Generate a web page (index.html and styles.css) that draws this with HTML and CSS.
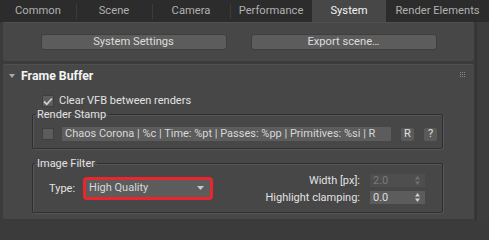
FILE: index.html
```html
<!DOCTYPE html>
<html>
<head>
<meta charset="utf-8">
<link rel="stylesheet" href="styles.css">
</head>
<body>
<div class="tabs">
  <div class="tab w-common">Common</div>
  <div class="tab w-scene">Scene</div>
  <div class="tab w-camera">Camera</div>
  <div class="tab w-perf">Performance</div>
  <div class="tab w-system active">System</div>
  <div class="tab w-re">Render Elements</div>
</div>
<div class="main">
  <div class="content">
    <div class="panel top-panel">
      <div class="btn wide">System Settings</div>
      <div class="btn wide">Export scene…</div>
    </div>
    <div class="panel fb">
      <div class="rollhead">
        <svg class="tri" width="6" height="4" viewBox="0 0 6 4"><path d="M0 0H6L3 4Z" fill="#a8a8a8"/></svg>
        <span class="rolltitle">Frame Buffer</span>
        <svg class="grip" width="6" height="6" viewBox="0 0 6 6" fill="#8a8a8a">
          <rect x="0" y="0" width="1" height="1"/><rect x="2" y="0" width="1" height="1"/><rect x="4" y="0" width="1" height="1"/>
          <rect x="0" y="2" width="1" height="1"/><rect x="2" y="2" width="1" height="1"/><rect x="4" y="2" width="1" height="1"/>
          <rect x="0" y="4" width="1" height="1"/><rect x="2" y="4" width="1" height="1"/><rect x="4" y="4" width="1" height="1"/>
        </svg>
      </div>
      <div class="body">
        <div class="checkrow">
          <span class="cb checked"><svg width="10" height="9" viewBox="0 0 10 9"><path d="M1 4.5L3.8 7.3L9 1.5" fill="none" stroke="#cfcfcf" stroke-width="1.8"/></svg></span>
          <span class="label">Clear VFB between renders</span>
        </div>
        <fieldset class="group stamp">
          <legend>Render Stamp</legend>
          <div class="stamprow">
            <span class="cb"></span>
            <div class="textfield">Chaos Corona | %c | Time: %pt | Passes: %pp | Primitives: %si | R</div>
            <div class="smallbtn">R</div>
            <div class="smallbtn">?</div>
          </div>
        </fieldset>
        <fieldset class="group filter">
          <legend>Image Filter</legend>
          <div class="filterrow">
            <div class="typecol">
              <span class="label">Type:</span>
              <div class="highlight">
                <div class="dropdown"><span>High Quality</span>
                  <svg width="7" height="4" viewBox="0 0 7 4"><path d="M0 0H7L3.5 4Z" fill="#c8c8c8"/></svg>
                </div>
              </div>
            </div>
            <div class="params">
              <div class="param">
                <span class="label">Width [px]:</span>
                <div class="spin disabled"><span>2.0</span>
                  <svg width="5" height="9" viewBox="0 0 5 9"><path d="M0 3.5H5L2.5 0Z M0 5.5H5L2.5 9Z" fill="#707070"/></svg>
                </div>
              </div>
              <div class="param">
                <span class="label">Highlight clamping:</span>
                <div class="spin"><span>0.0</span>
                  <svg width="5" height="9" viewBox="0 0 5 9"><path d="M0 3.5H5L2.5 0Z M0 5.5H5L2.5 9Z" fill="#d0d0d0"/></svg>
                </div>
              </div>
            </div>
          </div>
        </fieldset>
      </div>
    </div>
  </div>
  <div class="scroll"></div>
</div>
</body>
</html>
```

FILE: styles.css
```css
* { box-sizing: border-box; }
html, body { margin: 0; padding: 0; }
body {
  width: 489px;
  height: 221px;
  overflow: hidden;
  background: #3b3b3b;
  font-family: "Roboto", "Noto Sans", sans-serif;
  font-size: 11px;
  line-height: 14px;
  color: #e2e2e2;
}
.tabs {
  display: flex;
  height: 22px;
  background: #2c2c2c;
}
.tab {
  position: relative;
  display: flex;
  align-items: center;
  justify-content: center;
  color: #b0b0b0;
  font-size: 11.2px;
  padding-bottom: 1px;
}
.tab + .tab::before {
  content: "";
  position: absolute;
  left: 0;
  top: 4px;
  bottom: 3px;
  width: 1px;
  background: #3c3c3c;
}
.tab.active + .tab::before, .tab.active::before { display: none; }
.w-common { width: 76px; }
.w-scene { width: 76px; }
.w-camera { width: 78px; }
.w-perf { width: 82px; }
.w-system { width: 74px; }
.w-re { flex: 1; }
.tab.active {
  background: #474747;
  color: #f4f4f4;
}
.main {
  display: flex;
  height: 199px;
}
.content {
  width: 477px;
  padding-left: 3px;
  padding-right: 1px;
  border-right: 2px solid #343434;
}
.scroll {
  flex: 1;
  background: #3d3d3d;
}
.panel {
  background: #474747;
  border-radius: 2px;
}
.top-panel {
  height: 39px;
  display: flex;
  justify-content: center;
  gap: 24px;
  padding-top: 11px;
  border-top: 1px solid #505050;
}
.btn {
  height: 16px;
  background: #5c5c5c;
  border: 1px solid #3e3e3e;
  border-radius: 3px;
  display: flex;
  align-items: center;
  justify-content: center;
  color: #dcdcdc;
  font-size: 11.2px;
}
.btn.wide { width: 186px; }
.fb {
  margin-top: 3px;
  height: 155px;
  border-top: 1px solid #4f4f4f;
}
.rollhead {
  height: 20px;
  display: flex;
  align-items: center;
  padding-left: 6px;
  padding-right: 8px;
  padding-top: 1px;
}
.tri { margin-right: 6px; }
.rolltitle {
  font-weight: bold;
  font-size: 12.3px;
  color: #f4f4f4;
  flex: 1;
}
.grip { margin-top: -2px; }
.body {
  padding-left: 29px;
  padding-right: 31px;
}
.checkrow {
  display: flex;
  align-items: center;
  gap: 5px;
  padding-left: 10px;
  margin-top: 10px;
  height: 12px;
}
.cb {
  width: 12px;
  height: 12px;
  background: #5c5c5c;
  border: 1px solid #3e3e3e;
  display: inline-flex;
  align-items: center;
  justify-content: center;
  flex: none;
}
.group {
  margin: 0;
  border: 1px solid #2f2f2f;
  border-radius: 2px;
  box-shadow: 1px 1px 0 #565656, inset 1px 1px 0 #565656;
  padding: 0;
}
.group legend {
  padding: 0 2px;
  margin-left: 2px;
  line-height: 15px;
  color: #e2e2e2;
}
.stamprow {
  display: flex;
  align-items: center;
  height: 14px;
  margin: 5px 0 7px 9px;
}
.textfield {
  margin-left: 8px;
  width: 329px;
  height: 14px;
  background: #5c5c5c;
  line-height: 14px;
  padding-left: 3px;
  white-space: nowrap;
  overflow: hidden;
  color: #d8d8d8;
}
.smallbtn {
  width: 13px;
  height: 13px;
  background: #5a5a5a;
  border-radius: 2px;
  margin-left: 10px;
  display: flex;
  align-items: center;
  justify-content: center;
}
.filter {
  margin-top: 7px;
}
.filterrow {
  display: flex;
  justify-content: space-between;
  align-items: center;
  height: 30px;
  margin: 3px 17px 8px 16px;
}
.typecol {
  display: flex;
  align-items: center;
  gap: 8px;
}
.highlight {
  border: 3px solid #e8262c;
  border-radius: 4px;
  width: 130px;
  height: 23px;
  margin-top: -2px;
}
.dropdown {
  height: 100%;
  background: #5c5c5c;
  display: flex;
  align-items: center;
  justify-content: space-between;
  padding: 0 6px 0 3px;
  color: #d8d8d8;
}
.params {
  display: flex;
  flex-direction: column;
  gap: 4px;
  align-items: flex-end;
}
.param {
  display: flex;
  align-items: center;
  gap: 10px;
  height: 13px;
}
.spin {
  width: 55px;
  height: 13px;
  background: #5c5c5c;
  display: flex;
  align-items: center;
  justify-content: space-between;
  padding: 0 5px 0 3px;
  color: #dcdcdc;
}
.spin.disabled {
  background: #4e4e4e;
  color: #7a7a7a;
}
```
